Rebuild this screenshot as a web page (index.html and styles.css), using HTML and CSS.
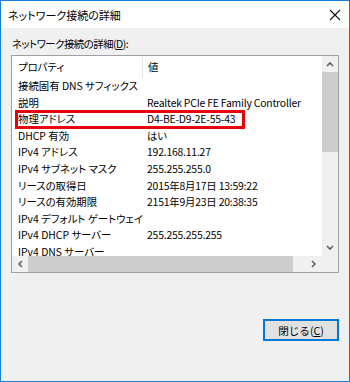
FILE: index.html
```html
<!DOCTYPE html>
<html lang="ja">
<head>
    <meta charset="UTF-8">
    <title>ネットワーク接続の詳細</title>
    <link rel="stylesheet" href="styles.css">
</head>
<body>
    <div class="window">
        <div class="titlebar">
            <span class="title">ネットワーク接続の詳細</span>
            <span class="close">
                <svg width="12" height="12" viewBox="0 0 12 12"><path d="M1 1L11 11M11 1L1 11" stroke="#111" stroke-width="1.1" fill="none"/></svg>
            </span>
        </div>
        <div class="content">
            <div class="label">ネットワーク接続の詳細(<u>D</u>):</div>
            <div class="listbox">
                <div class="list">
                    <div class="row header">
                        <div class="col-name">プロパティ</div>
                        <div class="col-value">値</div>
                    </div>
                    <div class="row"><div class="col-name">接続固有 DNS サフィックス</div><div class="col-value"></div></div>
                    <div class="row"><div class="col-name">説明</div><div class="col-value">Realtek PCIe FE Family Controller</div></div>
                    <div class="row marked"><div class="col-name">物理アドレス</div><div class="col-value">D4-BE-D9-2E-55-43</div></div>
                    <div class="row"><div class="col-name">DHCP 有効</div><div class="col-value">はい</div></div>
                    <div class="row"><div class="col-name">IPv4 アドレス</div><div class="col-value">192.168.11.27</div></div>
                    <div class="row"><div class="col-name">IPv4 サブネット マスク</div><div class="col-value">255.255.255.0</div></div>
                    <div class="row"><div class="col-name">リースの取得日</div><div class="col-value">2015年8月17日 13:59:22</div></div>
                    <div class="row"><div class="col-name">リースの有効期限</div><div class="col-value">2151年9月23日 20:38:35</div></div>
                    <div class="row"><div class="col-name">IPv4 デフォルト ゲートウェイ</div><div class="col-value"></div></div>
                    <div class="row"><div class="col-name">IPv4 DHCP サーバー</div><div class="col-value">255.255.255.255</div></div>
                    <div class="row"><div class="col-name">IPv4 DNS サーバー</div><div class="col-value"></div></div>
                </div>
                <div class="vscroll">
                    <span class="arrow"><svg width="8" height="6" viewBox="0 0 8 6"><path d="M1 5L4 2L7 5" stroke="#606060" stroke-width="1.6" fill="none"/></svg></span>
                    <span class="vthumb"></span>
                    <span class="vtrack"></span>
                    <span class="arrow"><svg width="8" height="6" viewBox="0 0 8 6"><path d="M1 1L4 4L7 1" stroke="#606060" stroke-width="1.6" fill="none"/></svg></span>
                </div>
                <div class="hscroll">
                    <span class="arrow"><svg width="6" height="8" viewBox="0 0 6 8"><path d="M5 1L2 4L5 7" stroke="#606060" stroke-width="1.6" fill="none"/></svg></span>
                    <span class="hthumb"></span>
                    <span class="htrack"></span>
                    <span class="arrow"><svg width="6" height="8" viewBox="0 0 6 8"><path d="M1 1L4 4L1 7" stroke="#606060" stroke-width="1.6" fill="none"/></svg></span>
                </div>
                <div class="corner"></div>
            </div>
            <div class="buttons">
                <button class="btn">閉じる(<u>C</u>)</button>
            </div>
        </div>
    </div>
</body>
</html>
```

FILE: styles.css
```css
body {
    margin: 0;
    padding: 0;
    font-family: 'Noto Sans CJK JP', 'Noto Sans', sans-serif;
    font-size: 10.4px;
    color: #000;
    background: #f0f0f0;
}
.window {
    width: 350px;
    height: 382px;
    box-sizing: border-box;
    border: 1px solid #1a7fd4;
    background-color: #f0f0f0;
    display: flex;
    flex-direction: column;
}
.titlebar {
    height: 27px;
    background-color: #fff;
    display: flex;
    align-items: center;
    justify-content: space-between;
    padding: 0 8px 0 7px;
    font-size: 11px;
}
.title {
    font-feature-settings: "palt";
}
.close {
    display: flex;
    margin-top: 1px;
}
.content {
    flex-grow: 1;
    padding: 8px 10px 0 10px;
}
.label {
    font-feature-settings: "palt";
    letter-spacing: -0.5px;
    line-height: 16px;
    padding-left: 1px;
    margin-bottom: 3px;
}
.listbox {
    width: 328px;
    height: 218px;
    box-sizing: border-box;
    border: 1px solid #a0a0a0;
    background-color: #fff;
    display: grid;
    grid-template-columns: 1fr 16px;
    grid-template-rows: 1fr 16px;
}
.list {
    overflow: hidden;
}
.row {
    display: flex;
    height: 16.6px;
    line-height: 16.6px;
    white-space: nowrap;
    position: relative;
}
.row.header {
    height: 22px;
    line-height: 22px;
}
.col-name {
    width: 124px;
    padding-left: 6px;
    font-feature-settings: "palt";
}
.header .col-name {
    border-right: 1px solid #e5e5e5;
}
.col-value {
    padding-left: 5px;
    font-feature-settings: "palt";
    letter-spacing: -0.2px;
}
/* red annotation box round the MAC row */
.row.marked::after {
    content: "";
    position: absolute;
    left: 3px;
    top: -1px;
    width: 224px;
    height: 13px;
    border: 3px solid #e8000b;
}
.vscroll {
    background-color: #f0f0f0;
    display: flex;
    flex-direction: column;
}
.vscroll .arrow {
    height: 16px;
    display: flex;
    align-items: center;
    justify-content: center;
}
.vthumb {
    height: 80px;
    background-color: #cdcdcd;
}
.vtrack {
    flex-grow: 1;
}
.hscroll {
    background-color: #f0f0f0;
    display: flex;
}
.hscroll .arrow {
    width: 16px;
    display: flex;
    align-items: center;
    justify-content: center;
}
.hthumb {
    width: 265px;
    background-color: #cdcdcd;
}
.htrack {
    flex-grow: 1;
}
.corner {
    background-color: #f0f0f0;
}
.buttons {
    width: 328px;
    display: flex;
    justify-content: flex-end;
    margin-top: 46px;
}
.btn {
    width: 76px;
    height: 22px;
    box-sizing: border-box;
    border: 2px solid #0078d7;
    background-color: #e1e1e1;
    font-family: 'Noto Sans CJK JP', sans-serif;
    font-size: 10.6px;
    padding: 0;
    color: #000;
}
u {
    text-underline-offset: 1px;
}
```
